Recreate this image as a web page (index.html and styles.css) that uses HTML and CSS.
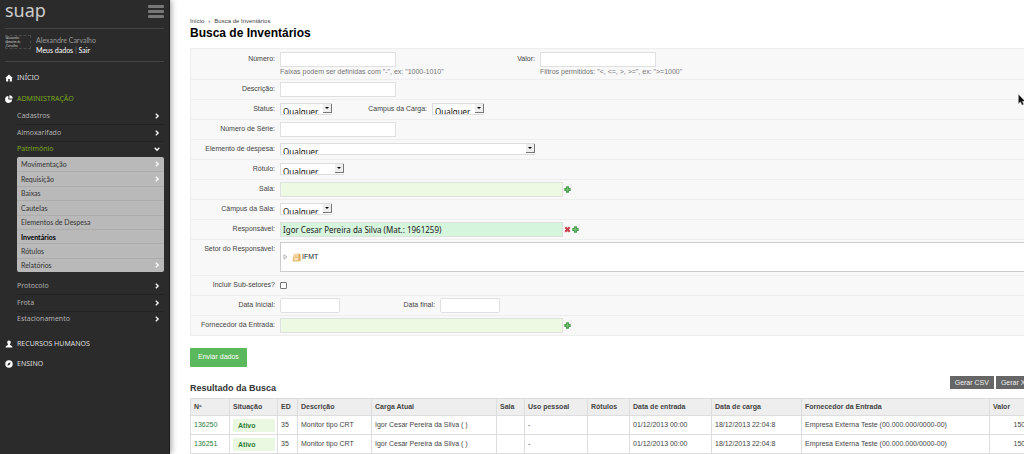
FILE: index.html
```html
<!DOCTYPE html>
<html lang="pt-BR">
<head>
<meta charset="utf-8">
<title>Busca de Inventários</title>
<link rel="stylesheet" href="styles.css">
</head>
<body>
<svg class="defs" aria-hidden="true">
  <symbol id="chev" viewBox="0 0 6 6"><path d="M1.8.7 4.2 3 1.8 5.3" fill="none" stroke="currentColor" stroke-width="1.3"/></symbol>
  <symbol id="plus" viewBox="0 0 7 7"><path d="M2 .3H5V2H6.700V5H5V6.700H2V5H.3V2H2Z" fill="#4a9e4e"/><path d="M3.500 1.500v4M1.500 3.500h4" stroke="#7cc47d" stroke-width=".8"/></symbol>
</svg>
<div class="app">
  <aside class="sidebar">
    <header class="brand">
      <span class="logo">suap</span>
      <button class="burger" aria-label="Menu"><i></i><i></i><i></i></button>
    </header>
    <div class="user">
      <span class="photo">Alexandre<br>Amorim de<br>Carvalho</span>
      <div>
        <div class="name">Alexandre Carvalho</div>
        <div class="links"><a href="#">Meus dados</a> <span>|</span> <a href="#">Sair</a></div>
      </div>
    </div>
    <nav>
      <a class="section" href="#"><svg viewBox="0 0 8 8"><path d="M4 .6 7.8 4.1H6.9V7.4H4.8V5H3.2V7.4H1.1V4.1H.2Z" fill="#fff"/></svg>INÍCIO</a>
      <a class="section active" href="#"><svg viewBox="0 0 8 8"><path d="M3.400.9V4.600H7.100A3.500 3.500 0 1 1 3.400.9Z" fill="#fff"/><path d="M4.400.2A3.400 3.400 0 0 1 7.700 3.600H4.400Z" fill="#fff"/></svg>ADMINISTRAÇÃO</a>
      <ul class="group">
        <li><a href="#">Cadastros<svg><use href="#chev"/></svg></a></li>
        <li><a href="#">Almoxarifado<svg><use href="#chev"/></svg></a></li>
        <li><a class="open" href="#">Patrimônio<svg viewBox="0 0 6 6"><path d="M.7 1.8 3 4.2 5.3 1.8" fill="none" stroke="#fff" stroke-width="1.3"/></svg></a></li>
      </ul>
      <ul class="sub">
        <li><a href="#">Movimentação<svg><use href="#chev"/></svg></a></li>
        <li><a href="#">Requisição<svg><use href="#chev"/></svg></a></li>
        <li><a href="#">Baixas</a></li>
        <li><a href="#">Cautelas</a></li>
        <li><a href="#">Elementos de Despesa</a></li>
        <li><a class="current" href="#">Inventários</a></li>
        <li><a href="#">Rótulos</a></li>
        <li><a href="#">Relatórios<svg><use href="#chev"/></svg></a></li>
      </ul>
      <ul class="group">
        <li><a href="#">Protocolo<svg><use href="#chev"/></svg></a></li>
        <li><a href="#">Frota<svg><use href="#chev"/></svg></a></li>
        <li><a href="#">Estacionamento<svg><use href="#chev"/></svg></a></li>
      </ul>
      <a class="section" href="#"><svg viewBox="0 0 8 8"><path d="M4 .5C5.300.5 5.800 1.400 5.700 2.500 5.600 3.700 5 4.200 5 4.800 5 5.500 7.400 5.500 7.500 7.400H.5C.6 5.500 3 5.500 3 4.800 3 4.200 2.400 3.700 2.300 2.500 2.200 1.400 2.700.5 4 .5Z" fill="#fff"/></svg>RECURSOS HUMANOS</a>
      <a class="section" href="#"><svg viewBox="0 0 8 8"><circle cx="4" cy="4" r="3.700" fill="#fff"/><path d="M2.300 5.700 3.300 3.300 5.700 2.300 4.700 4.700Z" fill="#2b2b2b"/></svg>ENSINO</a>
    </nav>
  </aside>

  <main class="content">
    <div class="crumbs"><a href="#">Início</a><span>›</span><a href="#">Busca de Inventários</a></div>
    <h1>Busca de Inventários</h1>
    <form>
      <div class="filters">
        <div class="row">
          <label for="numero">Número:</label>
          <div class="range"><input class="text" id="numero" type="text"><p>Faixas podem ser definidas com "-", ex: "1000-1010"</p></div>
          <label class="next" for="valor">Valor:</label>
          <div class="range"><input class="text" id="valor" type="text"><p>Filtros permitidos: "&lt;, &lt;=, &gt;, &gt;=", ex: "&gt;=1000"</p></div>
        </div>
        <div class="row"><label for="descricao">Descrição:</label><input class="text" id="descricao" type="text"></div>
        <div class="row">
          <label for="status">Status:</label><span class="pick"><select id="status"><option>Qualquer</option></select></span>
          <label class="next" for="campus">Campus da Carga:</label><span class="pick"><select id="campus"><option>Qualquer</option></select></span>
        </div>
        <div class="row"><label for="serie">Número de Série:</label><input class="text" id="serie" type="text"></div>
        <div class="row"><label for="elemento">Elemento de despesa:</label><span class="pick long"><select id="elemento"><option>Qualquer</option></select></span></div>
        <div class="row"><label for="rotulo">Rótulo:</label><span class="pick medium"><select id="rotulo"><option>Qualquer</option></select></span></div>
        <div class="row"><label for="sala">Sala:</label><input class="text lookup" id="sala" type="text"><svg class="act"><use href="#plus"/></svg></div>
        <div class="row"><label for="csala">Câmpus da Sala:</label><span class="pick"><select id="csala"><option>Qualquer</option></select></span></div>
        <div class="row"><label for="resp">Responsável:</label><input class="text lookup filled" id="resp" type="text" value="Igor Cesar Pereira da Silva (Mat.: 1961259)"><svg class="act" viewBox="0 0 7 7"><path d="M1.300 1.300 5.700 5.700M5.700 1.300 1.300 5.700" stroke="#c43c4b" stroke-width="2.200"/></svg><svg class="act"><use href="#plus"/></svg></div>
        <div class="row">
          <label>Setor do Responsável:</label>
          <div class="tree">
            <svg class="twist" viewBox="0 0 5 6"><path d="M1 .8 4 3 1 5.200Z" fill="#fff" stroke="#999" stroke-width=".7"/></svg>
            <svg class="folder" viewBox="0 0 9 9"><path d="M2.200 1 7.200.4 8.700 1.300V7.300L7.500 8.600H.4L1 4.400Z" fill="#e9bd78"/><path d="M2.700 1.600 6.200 1.200V7.300H2.200Z" fill="#fbe6bd"/><path d="M3.200 3H5.800M3 4.600H5.800M7.200 1V7.800" stroke="#d29a4b" stroke-width=".6"/></svg>
            <span>IFMT</span>
          </div>
        </div>
        <div class="row"><label for="subs">Incluir Sub-setores?</label><input class="check" id="subs" type="checkbox"></div>
        <div class="row">
          <label for="di">Data Inicial:</label><input class="text date" id="di" type="text">
          <label class="next" for="df">Data final:</label><input class="text date" id="df" type="text">
        </div>
        <div class="row"><label for="forn">Fornecedor da Entrada:</label><input class="text lookup" id="forn" type="text"><svg class="act"><use href="#plus"/></svg></div>
      </div>
      <button class="submit" type="submit">Enviar dados</button>
    </form>
    <section class="results">
      <div class="bar">
        <h2>Resultado da Busca</h2>
        <div class="exports"><button>Gerar CSV</button><button>Gerar XLS</button></div>
      </div>
      <table>
        <colgroup><col class="c-no"><col class="c-sit"><col class="c-ed"><col class="c-desc"><col class="c-carga"><col class="c-sala"><col class="c-uso"><col class="c-rot"><col class="c-ent"><col class="c-dc"><col><col class="c-val"></colgroup>
        <thead><tr><th>Nº</th><th>Situação</th><th>ED</th><th>Descrição</th><th>Carga Atual</th><th>Sala</th><th>Uso pessoal</th><th>Rótulos</th><th>Data de entrada</th><th>Data de carga</th><th>Fornecedor da Entrada</th><th>Valor</th></tr></thead>
        <tbody>
          <tr><td><a href="#">136250</a></td><td><span class="tag">Ativo</span></td><td>35</td><td>Monitor tipo CRT</td><td>Igor Cesar Pereira da Silva ( )</td><td></td><td>-</td><td></td><td>01/12/2013 00:00</td><td>18/12/2013 22:04:8</td><td>Empresa Externa Teste (00.000.000/0000-00)</td><td class="num">150,00</td></tr>
          <tr><td><a href="#">136251</a></td><td><span class="tag">Ativo</span></td><td>35</td><td>Monitor tipo CRT</td><td>Igor Cesar Pereira da Silva ( )</td><td></td><td>-</td><td></td><td>01/12/2013 00:00</td><td>18/12/2013 22:04:8</td><td>Empresa Externa Teste (00.000.000/0000-00)</td><td class="num">150,00</td></tr>
        </tbody>
      </table>
    </section>
  </main>
</div>
<svg class="cursor" viewBox="0 0 8 12"><path d="M.5.500V9.500L2.500 7.700 4 11 5.600 10.300 4.200 7.200H7Z" fill="#111" stroke="#999" stroke-width=".4"/></svg>
</body>
</html>
```
FILE: styles.css
```css
* { box-sizing: border-box; }
body {
  margin: 0;
  overflow: hidden;
  background: #fff;
  color: #444;
  font: 7px/10px "Liberation Sans", Arial, sans-serif;
}
a { color: inherit; text-decoration: none; }
ul { list-style: none; margin: 0; padding: 0; }
button, input, select { font: inherit; margin: 0; }
svg { display: block; flex: none; }
.defs { position: absolute; width: 0; height: 0; }
.app { display: flex; min-height: 100vh; }

/* Sidebar */
.sidebar {
  flex: none;
  width: 170px;
  padding: 0 5px;
  background: #2b2b2b;
  border-right: 1px solid #1c1c1c;
  box-shadow: 1px 0 6px #999;
  color: #b0b0b0;
  font-family: "Noto Sans", sans-serif;
}
.brand {
  display: flex;
  justify-content: space-between;
  height: 29px;
  border-bottom: 1px solid #444;
}
.logo { color: #ccc; font: 18px/20px "Noto Sans", sans-serif; }
.burger {
  display: grid;
  gap: 2px;
  align-content: start;
  width: 16px;
  padding: 5px 0 0;
  border: 0;
  background: none;
}
.burger i { height: 3px; border-radius: 1px; background: #777; }
.user {
  display: flex;
  gap: 5px;
  height: 33px;
  padding-top: 6px;
  border-bottom: 1px solid #444;
  font-family: Lato, sans-serif;
}
.photo {
  width: 26px;
  height: 14px;
  border: 1px dashed #4a4a4a;
  color: #ccc;
  font-size: 3px;
  line-height: 4px;
}
.name { color: #999; }
.links { color: #fff; }
.links span { color: #888; }
nav { padding-top: 6px; }
.section {
  display: flex;
  align-items: center;
  gap: 4px;
  height: 20px;
  color: #ddd;
}
.section svg { width: 8px; height: 8px; }
.section.active { height: 18px; margin-top: 2px; color: #7ba519; }
.group { display: grid; grid-auto-rows: 1fr; min-height: 49px; margin-left: 12px; }
.group li + li { border-top: 1px solid #232323; }
.group a, .sub a {
  display: flex;
  align-items: center;
  justify-content: space-between;
  height: 100%;
  padding-right: 4px;
}
.group svg, .sub svg { width: 6px; height: 6px; color: #fff; }
.group .open { color: #7ba519; }
.sub {
  display: grid;
  grid-auto-rows: 1fr;
  min-height: 115px;
  margin: 0 0 6px 12px;
  border-radius: 2px;
  background: #b9b9b9;
  color: #333;
  font-family: Lato, sans-serif;
}
.sub li { padding-left: 4px; }
.sub li + li { border-top: 1px solid #acacac; }
.sub .current { color: #000; font-weight: bold; }
.group + .section { margin-top: 7px; }

/* Content */
.content { flex: 1; min-width: 0; padding: 16px 0 0 20px; }
.crumbs { display: flex; gap: 4px; color: #444; font-size: 6px; }
h1 { margin: 0 0 8px; color: #000; font-size: 12px; line-height: 14px; }
.filters { border: 1px solid #eee; border-right: 0; background: #f8f8f8; }
.row {
  display: flex;
  align-items: flex-start;
  min-height: 20px;
  padding-top: 3px;
}
.row + .row { border-top: 1px solid #eee; padding-top: 2px; }
.row label {
  flex: none;
  width: 84px;
  margin-right: 5px;
  padding-top: 2px;
  text-align: right;
}
.row .next { margin-left: 11px; }
.range { width: 160px; }
.range p { margin: 0 0 2px; color: #777; white-space: nowrap; }
.text {
  display: block;
  width: 116px;
  height: 15px;
  padding: 0 2px;
  border: 1px solid #e0e0e0;
  background: #fff;
}
.date { width: 60px; border-radius: 2px; }
.lookup { width: 283px; background: #edf9e3; }
.filled { background: #d5f5dc; color: #222; font: 8px/12px "Noto Sans", sans-serif; }
.act { width: 7px; height: 7px; margin: 4px 0 0 1px; }
.pick { position: relative; display: block; width: 52px; height: 12px; margin-top: 1px; }
.medium { width: 64px; }
.long { width: 255px; }
.pick select {
  display: block;
  width: 100%;
  height: 12px;
  padding: 2px 0 0 2px;
  border: 1px solid #ddd;
  border-width: 1px 0 1px 1px;
  border-radius: 0;
  appearance: none;
  background: #fff;
  color: #111;
  font: 8px/11px "Noto Sans", sans-serif;
}
.pick::before {
  content: "";
  position: absolute;
  right: 0;
  top: 1px;
  width: 8px;
  height: 8px;
  border: 1px solid #777;
  border-width: 0 1px 1px 0;
  background: #eee;
}
.pick::after {
  content: "";
  position: absolute;
  right: 3px;
  top: 4px;
  border: 2px solid transparent;
  border-top-color: #000;
  border-bottom: 0;
}
.tree {
  display: flex;
  align-items: center;
  flex: 1;
  height: 30px;
  margin-bottom: 3px;
  padding-left: 2px;
  border: 1px solid #ccc;
  border-right: 0;
  background: #fff;
  color: #222;
}
.twist { width: 5px; height: 6px; margin-right: 4px; }
.folder { width: 9px; height: 9px; margin-right: 1px; }
.check {
  width: 7px;
  height: 7px;
  margin-top: 4px;
  border: 1px solid #777;
  border-radius: 1px;
  appearance: none;
  background: #fff;
}
.submit {
  display: block;
  margin-top: 12px;
  padding: 4px 8px 5px;
  border: 0;
  border-radius: 1px;
  background: #5cb85c;
  color: #fff;
  line-height: 10px;
}
.results { margin-top: 7px; }
.bar { display: flex; justify-content: space-between; height: 24px; }
h2 { margin: 0; padding-top: 8px; color: #333; font-size: 9px; line-height: 12px; }
.exports { display: flex; gap: 2px; margin: 2px -15px 0 0; }
.exports button {
  height: 13px;
  padding: 0 5px;
  border: 0;
  background: #666;
  color: #eee;
  line-height: 13px;
}
table {
  width: calc(100% + 15px);
  border-collapse: collapse;
  table-layout: fixed;
}
th, td { border: 1px solid #ddd; padding: 0 3px; text-align: left; white-space: nowrap; }
th { height: 17px; background: #eee; }
td { height: 19px; }
td a { color: #2f7d3a; }
.num { text-align: right; }
.tag {
  display: block;
  width: 42px;
  padding: 2px 5px 1px;
  background: #eaf8e1;
  color: #2f7d3a;
  font-weight: bold;
}
.c-no { width: 39px; }
.c-sit { width: 48px; }
.c-ed { width: 20px; }
.c-desc { width: 74px; }
.c-carga { width: 125px; }
.c-sala { width: 28px; }
.c-uso { width: 63px; }
.c-rot { width: 42px; }
.c-ent { width: 82px; }
.c-dc { width: 90px; }
.c-val { width: 49px; }
.cursor { position: absolute; left: calc(100% - 6px); top: 94px; width: 8px; height: 12px; }
```
